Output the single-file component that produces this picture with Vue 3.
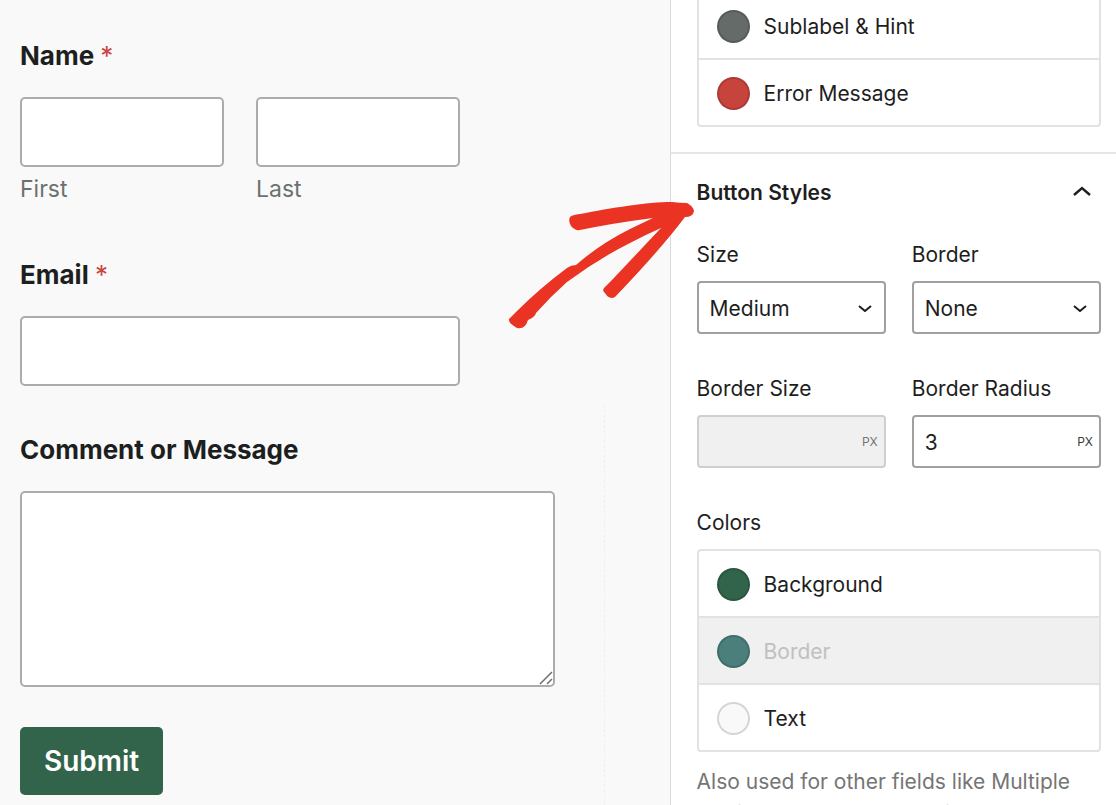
<script setup>
import { ref } from 'vue'

const first = ref('')
const last = ref('')
const email = ref('')
const message = ref('')
const size = ref('Medium')
const border = ref('None')
const borderSize = ref('')
const radius = ref('3')
const open = ref(true)

const fieldColors = [
  { label: 'Sublabel & Hint', tone: 'slate' },
  { label: 'Error Message', tone: 'red' },
]
const buttonColors = [
  { label: 'Background', tone: 'green' },
  { label: 'Border', tone: 'teal', disabled: true },
  { label: 'Text', tone: 'light' },
]
</script>

<template>
  <div class="editor">
    <main class="preview">
      <form class="form" @submit.prevent>
        <div class="field narrow" role="group" aria-labelledby="name-title">
          <div id="name-title" class="title">Name <span class="req">*</span></div>
          <div class="pair">
            <div>
              <input id="first" v-model="first" class="box" type="text" />
              <label class="sub" for="first">First</label>
            </div>
            <div>
              <input id="last" v-model="last" class="box" type="text" />
              <label class="sub" for="last">Last</label>
            </div>
          </div>
        </div>
        <div class="field narrow">
          <label class="title" for="email">Email <span class="req">*</span></label>
          <input id="email" v-model="email" class="box" type="email" />
        </div>
        <div class="field wide">
          <label class="title" for="message">Comment or Message</label>
          <div class="area">
            <textarea id="message" v-model="message" class="box tall"></textarea>
            <svg class="grip" viewBox="0 0 14 14" aria-hidden="true">
              <path d="M1 13L13 1M8 13L13 8" />
            </svg>
          </div>
        </div>
        <button class="submit" type="submit">Submit</button>
      </form>
      <div class="guide"></div>
    </main>

    <aside class="panel">
      <section class="group fields">
        <ul class="colors">
          <li v-for="c in fieldColors" :key="c.label">
            <button type="button" class="color"><span class="dot" :class="c.tone"></span>{{ c.label }}</button>
          </li>
        </ul>
      </section>

      <section class="group">
        <h2 class="heading">
          <button type="button" class="toggle" :aria-expanded="open" @click="open = !open">
            Button Styles
            <svg class="up" viewBox="0 0 18 14" aria-hidden="true"><path d="M1 9L9 2L17 9" /></svg>
          </button>
        </h2>
        <div v-if="open">
          <div class="controls">
            <div>
              <label class="caption" for="size">Size</label>
              <div class="wrap">
                <select id="size" v-model="size" class="input">
                  <option>Small</option>
                  <option>Medium</option>
                  <option>Large</option>
                </select>
                <svg class="down" viewBox="0 0 14 8" aria-hidden="true"><path d="M1 2L7 7L13 2" /></svg>
              </div>
            </div>
            <div>
              <label class="caption" for="border">Border</label>
              <div class="wrap">
                <select id="border" v-model="border" class="input">
                  <option>None</option>
                  <option>Solid</option>
                  <option>Dashed</option>
                </select>
                <svg class="down" viewBox="0 0 14 8" aria-hidden="true"><path d="M1 2L7 7L13 2" /></svg>
              </div>
            </div>
            <div>
              <label class="caption" for="border-size">Border Size</label>
              <div class="wrap off">
                <input id="border-size" v-model="borderSize" class="input" type="text" disabled />
                <span class="unit">PX</span>
              </div>
            </div>
            <div>
              <label class="caption" for="radius">Border Radius</label>
              <div class="wrap">
                <input id="radius" v-model="radius" class="input" type="text" />
                <span class="unit">PX</span>
              </div>
            </div>
          </div>
          <h3 class="caption">Colors</h3>
          <ul class="colors">
            <li v-for="c in buttonColors" :key="c.label">
              <button type="button" class="color" :disabled="c.disabled">
                <span class="dot" :class="c.tone"></span>{{ c.label }}
              </button>
            </li>
          </ul>
          <p class="note">Also used for other fields like Multiple Choice, Checkboxes, Rating, and NPS Survey.</p>
        </div>
      </section>

      <svg class="pointer" viewBox="500 192 204 144" aria-hidden="true">
        <path d="M510 318L516 312Q540 288 567 268Q571 265 576 265Q600 244 630 229L653 218Q614 223 580 230Q575 231 571 226Q568 221 570 217Q572 215 580 214C611 208 647 202 672 202Q680 203 687 203Q693 206 694 211Q693 217 685 217Q661 249 615 297Q609 300 605 293Q602 291 604 288L612 280L661 228Q645 235 630 243Q598 259 567 282Q550 297 536 313Q535 317 528 320Q525 330 517 328Q508 323 509 319Z" />
      </svg>
    </aside>
  </div>
</template>

<style>
body {
  background: #f9f9f9;
}
</style>

<style scoped>
* {
  box-sizing: border-box;
}
.editor {
  display: grid;
  grid-template-columns: 3fr 2fr;
  height: 100vh;
  overflow: hidden;
  font-family: Inter, "Liberation Sans", sans-serif;
  font-size: 21px;
  line-height: 28px;
  color: #1e1e1e;
}
button,
input,
select,
textarea {
  font: inherit;
  color: inherit;
  margin: 0;
}

/* Form preview */
.preview {
  display: grid;
  grid-template-columns: 1fr 66px;
  background: #f9f9f9;
}
.form {
  padding: 40px 0 0 20px;
}
.guide {
  margin-top: 405px;
  border-left: 1px dashed #efefef;
}
.field {
  margin-bottom: 48px;
}
.narrow {
  width: 440px;
  max-width: 100%;
}
.wide {
  width: 535px;
  max-width: 100%;
  margin-bottom: 40px;
}
.title {
  display: block;
  margin-bottom: 25px;
  font-size: 26px;
  font-weight: 700;
  line-height: 32px;
  color: #1c1f1e;
}
.req {
  font-weight: 400;
  color: #cc453e;
}
.pair {
  display: grid;
  grid-template-columns: 1fr 1fr;
  gap: 32px;
}
.box {
  display: block;
  width: 100%;
  height: 70px;
  padding: 0 16px;
  border: 2px solid #a9aeac;
  border-radius: 5px;
  background: #fff;
  outline: 0;
}
.sub {
  display: block;
  padding: 6px 0;
  font-size: 23px;
  line-height: 32px;
  color: #6c716f;
}
.area {
  position: relative;
}
.tall {
  height: 196px;
  padding: 16px;
  resize: none;
}
.grip {
  position: absolute;
  right: 2px;
  bottom: 2px;
  width: 14px;
  height: 14px;
  fill: none;
  stroke: #6f6f6f;
  stroke-width: 1.5;
}
.submit {
  height: 68px;
  padding: 0 24px;
  border: 0;
  border-radius: 5px;
  background: #32644b;
  color: #fff;
  font-size: 28px;
  font-weight: 600;
}

/* Settings panel */
.panel {
  position: relative;
  border-left: 1px solid #dadada;
  background: #fff;
}
.group {
  padding: 0 15px 0 26px;
}
.fields {
  padding-bottom: 25px;
  border-bottom: 2px solid #e6e6e6;
}
.fields .colors {
  margin-top: -9px;
}
.colors {
  margin: 0;
  padding: 0;
  list-style: none;
  border: 2px solid #e2e2e2;
  border-radius: 4px;
}
.colors li + li {
  border-top: 2px solid #e2e2e2;
}
.color {
  display: flex;
  align-items: center;
  gap: 14px;
  width: 100%;
  height: 65px;
  padding: 2px 18px 0;
  border: 0;
  background: none;
  text-align: left;
}
.color:disabled {
  background: #f0f0f0;
  color: #c0c0c0;
}
.dot {
  width: 33px;
  height: 33px;
  border: 2px solid rgba(0, 0, 0, 0.14);
  border-radius: 50%;
}
.slate { background: #646b69; }
.red { background: #c7443d; }
.green { background: #32644b; }
.teal { background: #4a7f7c; }
.light { background: #f9f9f9; }

.heading {
  margin: 0 0 11px;
  font-size: 21px;
}
.toggle {
  display: flex;
  align-items: center;
  justify-content: space-between;
  width: 100%;
  height: 76px;
  padding: 2px 10px 0 0;
  border: 0;
  background: none;
  font-weight: 600;
}
.up {
  width: 18px;
  height: 14px;
  fill: none;
  stroke: #1e1e1e;
  stroke-width: 2.4;
}
.controls {
  display: grid;
  grid-template-columns: 1fr 1fr;
  gap: 41px 26px;
  margin-bottom: 41px;
}
.caption {
  display: block;
  margin: 0 0 12px;
  font-size: 21px;
  font-weight: 400;
}
.wrap {
  display: flex;
  align-items: center;
  position: relative;
}
.input {
  width: 100%;
  height: 53px;
  padding: 2px 40px 0 11px;
  border: 2px solid #a0a0a0;
  border-radius: 4px;
  background: #fff;
  appearance: none;
  outline: 0;
}
.down {
  position: absolute;
  right: 14px;
  width: 14px;
  height: 8px;
  fill: none;
  stroke: #1e1e1e;
  stroke-width: 2;
  pointer-events: none;
}
.unit {
  position: absolute;
  right: 8px;
  font-size: 12px;
  color: #3c3c3c;
}
.off .input {
  border-color: #cfcfcf;
  background: #f0f0f0;
}
.off .unit {
  color: #757575;
}
.note {
  margin: 14px 0 0;
  line-height: 32px;
  color: #757575;
}

/* Hand-drawn arrow that points at the section heading */
.pointer {
  position: absolute;
  top: 192px;
  left: -171px;
  width: 204px;
  height: 144px;
  fill: #ea3323;
  pointer-events: none;
}
</style>
